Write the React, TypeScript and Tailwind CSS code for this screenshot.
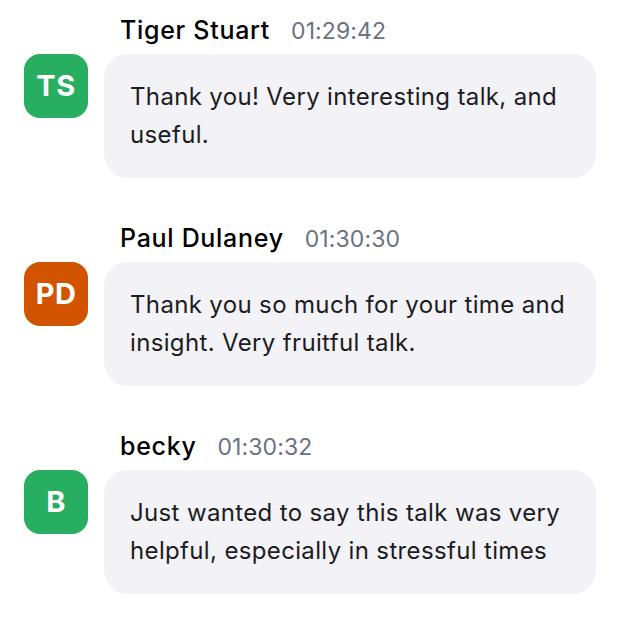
const messages = [
  {
    initials: "TS",
    color: "bg-[#27ae60]",
    name: "Tiger Stuart",
    time: "01:29:42",
    text: "Thank you! Very interesting talk, and useful.",
  },
  {
    initials: "PD",
    color: "bg-[#d35400]",
    name: "Paul Dulaney",
    time: "01:30:30",
    text: "Thank you so much for your time and insight. Very fruitful talk.",
  },
  {
    initials: "B",
    color: "bg-[#27ae60]",
    name: "becky",
    time: "01:30:32",
    text: "Just wanted to say this talk was very helpful, especially in stressful times",
  },
];

export default function App() {
  return (
    <div className="min-h-screen bg-white font-['Inter',sans-serif] pt-[14px] pl-6 pr-[34px]">
      <div className="flex flex-col gap-[44px]">
        {messages.map((m) => (
          <div key={m.name} className="flex flex-col gap-2">
            <div className="flex items-baseline gap-[21px] pl-24 h-8">
              <span className="text-[25px] leading-8 font-medium tracking-[0.7px] text-black">{m.name}</span>
              <span className="text-[23px] leading-8 tracking-[0.1px] text-[#6b7280]">{m.time}</span>
            </div>
            <div className="flex items-start gap-4">
              <div
                className={`${m.color} w-16 h-16 rounded-2xl flex items-center justify-center shrink-0 text-white font-bold text-[29px] tracking-[0.5px]`}
              >
                {m.initials}
              </div>
              <div className="flex-1 bg-[#f2f2f7] rounded-3xl px-[26px] py-6 text-[24px] leading-[38px] tracking-[0.35px] text-[#1c1c1e]">
                {m.text}
              </div>
            </div>
          </div>
        ))}
      </div>
    </div>
  );
}
